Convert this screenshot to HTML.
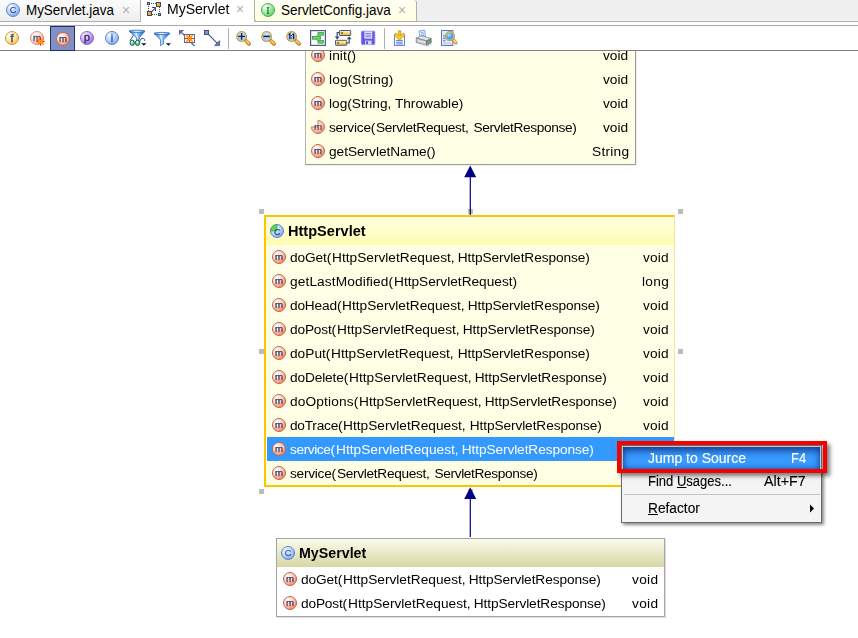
<!DOCTYPE html>
<html><head><meta charset="utf-8"><title>MyServlet</title>
<style>
html,body{margin:0;padding:0;}
body{width:858px;height:638px;overflow:hidden;background:#fff;position:relative;font-family:"Liberation Sans",sans-serif;font-size:14px;color:#000;}
div,span,svg{position:absolute;box-sizing:border-box;}
.ic{overflow:visible}
.t{white-space:pre;line-height:30px;}
.g{will-change:transform;}
.mi{-webkit-text-stroke:0.12px currentColor;}
.h{width:5px;height:5px;background:#bcbcbc;}
</style></head><body>
<svg width="0" height="0" style="position:absolute">
<defs>
<radialGradient id="g-m" cx="0.32" cy="0.26" r="0.82"><stop offset="0" stop-color="#fffcfa"/><stop offset="0.5" stop-color="#ffd0c0"/><stop offset="1" stop-color="#ff7e5c"/></radialGradient>
<radialGradient id="g-m2" cx="0.32" cy="0.26" r="0.82"><stop offset="0" stop-color="#ffffff"/><stop offset="0.5" stop-color="#ffe0d8"/><stop offset="1" stop-color="#f8a890"/></radialGradient>
<radialGradient id="g-c" cx="0.32" cy="0.26" r="0.82"><stop offset="0" stop-color="#f4f9ff"/><stop offset="0.5" stop-color="#bcd6fc"/><stop offset="1" stop-color="#74a4f0"/></radialGradient>
<radialGradient id="g-f" cx="0.32" cy="0.26" r="0.82"><stop offset="0" stop-color="#fffef2"/><stop offset="0.5" stop-color="#ffeaa8"/><stop offset="1" stop-color="#f6bc4c"/></radialGradient>
<radialGradient id="g-p" cx="0.32" cy="0.26" r="0.82"><stop offset="0" stop-color="#faf4ff"/><stop offset="0.5" stop-color="#d0b0f8"/><stop offset="1" stop-color="#9060e0"/></radialGradient>
<radialGradient id="g-i" cx="0.32" cy="0.26" r="0.82"><stop offset="0" stop-color="#f6fff6"/><stop offset="0.5" stop-color="#a4f0a4"/><stop offset="1" stop-color="#50cc5c"/></radialGradient>
<g id="i-m"><circle cx="8" cy="8" r="6.5" fill="url(#g-m)" stroke="#c0644c" stroke-width="1"/><text x="8" y="11.3" font-family="Liberation Sans, sans-serif" font-size="9.6" text-anchor="middle" fill="#283860" stroke="#283860" stroke-width="0.25">m</text></g>
<g id="i-m2"><circle cx="8" cy="8" r="6.5" fill="url(#g-m2)" stroke="#d48c7c" stroke-width="1"/><text x="8" y="11.4" font-family="Liberation Sans, sans-serif" font-size="9.8" text-anchor="middle" fill="#38486c" stroke="#38486c" stroke-width="0.3">m</text></g>
<g id="i-c"><circle cx="8" cy="8" r="6.5" fill="url(#g-c)" stroke="#5c84d0" stroke-width="1"/><text x="8" y="11.4" font-family="Liberation Sans, sans-serif" font-size="9.2" text-anchor="middle" fill="#34447c" stroke="#34447c" stroke-width="0.1">C</text></g>
<g id="i-f"><circle cx="8" cy="8" r="6.5" fill="url(#g-f)" stroke="#c89840" stroke-width="1"/><text x="8" y="11.8" font-family="Liberation Sans, sans-serif" font-size="10.6" text-anchor="middle" fill="#38486c" stroke="#38486c" stroke-width="0.45">f</text></g>
<g id="i-p"><circle cx="8" cy="8" r="6.5" fill="url(#g-p)" stroke="#8c68cc" stroke-width="1"/><text x="8" y="10.9" font-family="Liberation Sans, sans-serif" font-size="10.6" text-anchor="middle" fill="#34346c" stroke="#34346c" stroke-width="0.45">p</text></g>
<g id="i-ac"><circle cx="8" cy="8" r="6.5" fill="url(#g-c)" stroke="#5c84d0" stroke-width="1"/><path d="M8 8 V1.5 A6.5 6.5 0 0 0 1.5 8 Z" fill="#5cd45c" stroke="#3ca04c" stroke-width="0.6"/><text x="8.4" y="11.6" font-family="Liberation Sans, sans-serif" font-size="9.2" text-anchor="middle" fill="#2c3c6c" stroke="#2c3c6c" stroke-width="0.1">C</text></g>
<g id="i-am"><path d="M8 8 V1.5 A6.5 6.5 0 1 1 1.5 8 Z" fill="url(#g-m)" stroke="#cc7458" stroke-width="1"/><text x="8" y="11.3" font-family="Liberation Sans, sans-serif" font-size="9.8" text-anchor="middle" fill="#2c3c64" stroke="#2c3c64" stroke-width="0.15">m</text></g>
<g id="i-i"><circle cx="8" cy="8" r="6.5" fill="url(#g-c)" stroke="#5c84d0" stroke-width="1"/><text x="8" y="11.8" font-family="Liberation Sans, sans-serif" font-size="10.6" text-anchor="middle" fill="#3458b0" stroke="#3458b0" stroke-width="0.45">i</text></g>
<g id="i-I"><circle cx="8" cy="8" r="6.5" fill="url(#g-i)" stroke="#48b058" stroke-width="1"/><text x="8" y="11.6" font-family="Liberation Serif, serif" font-size="10" text-anchor="middle" fill="#2c4468" stroke="#2c4468" stroke-width="0.1">I</text></g>
</defs></svg>

<div style="left:0;top:0;width:858px;height:22px;background:#f0f0f0;border-bottom:1px solid #b4b4b4"></div>
<div style="left:0;top:0;width:141px;height:22px;background:linear-gradient(#fbfbfb,#eeeeee);border-right:1px solid #b0b0b0;border-bottom:1px solid #b0b0b0"></div>
<svg class="ic g" style="left:5px;top:2px" width="16" height="16" viewBox="0 0 16 16"><use href="#i-c"/></svg>
<span class="t" style="left:26.20px;top:-5px;font-size:14px;transform:scaleX(0.9569);transform-origin:0 20px">MyServlet.java</span>
<span class="t" style="left:121.68px;top:-5px;font-size:15px;transform:scaleX(0.9185);transform-origin:0 19px;color:#b0b0b0">×</span>
<div style="left:141px;top:0;width:113px;height:22px;background:#fff"></div>
<svg style="left:147px;top:2px" width="14" height="14" viewBox="0 0 14 14" shape-rendering="crispEdges"><g fill="#3a4a74"><rect x="0" y="0" width="3" height="3"/><rect x="11" y="11" width="3" height="3"/><rect x="9" y="0" width="5" height="5"/><rect x="0" y="9" width="5" height="5"/><rect x="4" y="1" width="1" height="1"/><rect x="6" y="1" width="1" height="1"/><rect x="8" y="1" width="1" height="1"/><rect x="1" y="4" width="1" height="1"/><rect x="1" y="6" width="1" height="1"/><rect x="1" y="8" width="1" height="1"/><rect x="12" y="5" width="1" height="1"/><rect x="12" y="7" width="1" height="1"/><rect x="12" y="9" width="1" height="1"/><rect x="5" y="12" width="1" height="1"/><rect x="7" y="12" width="1" height="1"/><rect x="9" y="12" width="1" height="1"/><rect x="5" y="5" width="4" height="1"/><rect x="8" y="5" width="1" height="4"/></g><rect x="1" y="1" width="1" height="1" fill="#88e868"/><rect x="12" y="12" width="1" height="1" fill="#88e868"/><rect x="10" y="1" width="3" height="3" fill="#ffa414"/><rect x="10" y="1" width="1" height="1" fill="#ffd890"/><rect x="1" y="10" width="3" height="3" fill="#ffa414"/><rect x="1" y="10" width="1" height="1" fill="#ffd890"/><path d="M5 9.4 L8 6.4" stroke="#3a4a74" stroke-width="1.2" shape-rendering="auto"/></svg>
<span class="t g" style="left:167.45px;top:-6px;font-size:14px;transform:scaleX(1.0016);transform-origin:0 20px">MyServlet</span>
<span class="t" style="left:235.78px;top:-6px;font-size:15px;transform:scaleX(0.9185);transform-origin:0 19px;color:#b0b0b0">×</span>
<div style="left:254px;top:0;width:163px;height:22px;background:linear-gradient(#fffff4,#ffffe2);border:1px solid #b0b0a4;border-top:none;border-radius:0 3px 0 3px"></div>
<svg class="ic g" style="left:260px;top:2px" width="16" height="16" viewBox="0 0 16 16"><use href="#i-I"/></svg>
<span class="t" style="left:280.98px;top:-5px;font-size:14px;transform:scaleX(0.9659);transform-origin:0 20px">ServletConfig.java</span>
<span class="t" style="left:398.08px;top:-5px;font-size:15px;transform:scaleX(0.9185);transform-origin:0 19px;color:#b0b0b0">×</span>
<div style="left:0;top:25px;width:858px;height:26px;background:#fff;border-top:1px solid #a8a8a8;border-bottom:1px solid #808080"></div>
<div style="left:50px;top:26px;width:25px;height:25px;background:#8090c0;border:1px solid #1c3080"></div>
<svg class="ic g" style="left:4px;top:30px" width="16" height="16" viewBox="0 0 16 16"><use href="#i-f"/></svg>
<svg class="ic g" style="left:29px;top:30px" width="16" height="16" viewBox="0 0 16 16"><use href="#i-m2"/></svg>
<svg class="ic g" style="left:55px;top:31px" width="16" height="16" viewBox="0 0 16 16"><use href="#i-m"/></svg>
<svg class="ic g" style="left:79px;top:30px" width="16" height="16" viewBox="0 0 16 16"><use href="#i-p"/></svg>
<svg class="ic g" style="left:104px;top:30px" width="16" height="16" viewBox="0 0 16 16"><use href="#i-i"/></svg>
<div style="left:228px;top:28px;width:1px;height:21px;background:#b0b0b0"></div>
<div style="left:384px;top:28px;width:1px;height:21px;background:#b0b0b0"></div>
<svg style="left:0;top:0" width="858" height="52" viewBox="0 0 858 52"><defs><linearGradient id="g-fun" x1="0" x2="1" y1="0" y2="0"><stop offset="0" stop-color="#2c78d4"/><stop offset="0.45" stop-color="#a8d4ff"/><stop offset="1" stop-color="#1c60c0"/></linearGradient><linearGradient id="g-rim" x1="0" x2="1" y1="0" y2="0"><stop offset="0" stop-color="#3c84dc"/><stop offset="0.4" stop-color="#e8f4ff"/><stop offset="0.6" stop-color="#e8f4ff"/><stop offset="1" stop-color="#3c84dc"/></linearGradient><linearGradient id="g-lens" x1="0" x2="0" y1="0" y2="1"><stop offset="0" stop-color="#e4f2ff"/><stop offset="0.55" stop-color="#9cccf8"/><stop offset="1" stop-color="#c8e4ff"/></linearGradient><linearGradient id="g-yl" x1="0" x2="0" y1="0" y2="1"><stop offset="0" stop-color="#fff8dc"/><stop offset="0.45" stop-color="#ffd878"/><stop offset="1" stop-color="#f4a41c"/></linearGradient></defs><g transform="translate(40.6 41.6)"><path d="M-3 -3 L3 3 M-3 3 L3 -3" stroke="#ff9400" stroke-width="1.6"/><path d="M0 -4.2 V4.2 M-4.2 0 H4.2" stroke="#ff2000" stroke-width="1"/><circle r="1.7" fill="#ffe860" stroke="#ff4800" stroke-width="0.6"/><circle r="0.6" fill="#ff2000"/></g><path d="M129.4 31.4 L136.5 37.8 V41 L139.5 39.2 V37.8 L144.6 31.4 Z" fill="url(#g-fun)" stroke="#2c6cc8" stroke-width="0.7"/><path d="M134.6 32.2 L137.4 37.8 V40 L138.2 39.6 V37.8 L136.4 32.2 Z" fill="#ffffff" opacity="0.75"/><ellipse cx="137.0" cy="31.3" rx="8.0" ry="1.1" fill="url(#g-rim)" stroke="#2464c0" stroke-width="0.8"/><path d="M130 40.6 L133.4 35.2" fill="none" stroke="#2a3a60" stroke-width="0.9"/><path d="M139.6 41.6 Q140.6 37.6 143.4 38.4 Q144.9 39 144.6 40.8" fill="none" stroke="#2a3a60" stroke-width="0.9"/><ellipse cx="132.2" cy="42.8" rx="2.2" ry="2.7" fill="#50e870" stroke="#2a3a60" stroke-width="0.9"/><ellipse cx="137.6" cy="42.8" rx="2.2" ry="2.7" fill="#50e870" stroke="#2a3a60" stroke-width="0.9"/><ellipse cx="131.8" cy="42" rx="0.9" ry="1.3" fill="#d0ffd8"/><ellipse cx="137.2" cy="42" rx="0.9" ry="1.3" fill="#d0ffd8"/><path d="M141.2 43.2 H146.4 L143.8 45.8 Z" fill="#101828"/><path d="M154.4 33.6 L160.5 40.0 V45.6 L163.5 43.800000000000004 V40.0 L169.6 33.6 Z" fill="url(#g-fun)" stroke="#2c6cc8" stroke-width="0.7"/><path d="M159.6 34.4 L161.4 40.0 V44.6 L162.2 44.2 V40.0 L161.4 34.4 Z" fill="#ffffff" opacity="0.75"/><ellipse cx="162.0" cy="33.5" rx="8.0" ry="1.1" fill="url(#g-rim)" stroke="#2464c0" stroke-width="0.8"/><path d="M165.8 43.2 H171 L168.4 45.8 Z" fill="#101828"/><path d="M180.6 31.6 L185 36" stroke="#4a5c94" stroke-width="1.2" fill="none"/><path d="M179 30 H184.2 L179 35.2 Z" fill="#5c70a8"/><path d="M191.4 43 L194.6 46" stroke="#4a5c94" stroke-width="1.2" fill="none"/><rect x="184.5" y="34.5" width="10" height="8" fill="#fffaf4" stroke="#5a6a9c" stroke-width="1"/><g transform="translate(189.5 38.5)"><path d="M-3.2 -3.2 L3.2 3.2 M-3.2 3.2 L3.2 -3.2" stroke="#ff9400" stroke-width="1.6"/><path d="M0 -4 V4 M-4.4 0 H4.4" stroke="#ff2000" stroke-width="1"/><circle r="1.7" fill="#ffd820" stroke="#ff4800" stroke-width="0.6"/><circle r="0.6" fill="#ff2000"/></g><rect x="204.5" y="30.5" width="4" height="4" fill="#8494c8" stroke="#3e4e84" stroke-width="1"/><path d="M208.4 34.4 L217.6 43.6" stroke="#4a5c94" stroke-width="1.3" fill="none"/><path d="M219.6 45.6 V40.6 L214.6 45.6 Z" fill="#6478b4" stroke="#3e4e84" stroke-width="0.7"/><line x1="246.2" y1="41.0" x2="249.0" y2="43.8" stroke="#b07418" stroke-width="3.8" stroke-linecap="round"/><line x1="246.2" y1="41.0" x2="248.9" y2="43.699999999999996" stroke="#f4a840" stroke-width="2.6" stroke-linecap="round"/><line x1="246.5" y1="40.699999999999996" x2="249.1" y2="43.3" stroke="#ffe0a8" stroke-width="0.9" stroke-linecap="round"/><circle cx="241.6" cy="36.4" r="5.3" fill="#a87c28"/><circle cx="241.6" cy="36.4" r="4.8" fill="#f0c460"/><circle cx="241.6" cy="36.4" r="3.9" fill="url(#g-lens)" stroke="#8a97b0" stroke-width="0.4"/><path d="M238.29999999999998 36.4H244.9M241.6 33.1V39.699999999999996" stroke="#14244c" stroke-width="1.4" fill="none"/><line x1="271.20000000000005" y1="41.0" x2="274.0" y2="43.8" stroke="#b07418" stroke-width="3.8" stroke-linecap="round"/><line x1="271.20000000000005" y1="41.0" x2="273.90000000000003" y2="43.699999999999996" stroke="#f4a840" stroke-width="2.6" stroke-linecap="round"/><line x1="271.5" y1="40.699999999999996" x2="274.1" y2="43.3" stroke="#ffe0a8" stroke-width="0.9" stroke-linecap="round"/><circle cx="266.6" cy="36.4" r="5.3" fill="#a87c28"/><circle cx="266.6" cy="36.4" r="4.8" fill="#f0c460"/><circle cx="266.6" cy="36.4" r="3.9" fill="url(#g-lens)" stroke="#8a97b0" stroke-width="0.4"/><path d="M263.3 36.4H269.90000000000003" stroke="#14244c" stroke-width="1.5" fill="none"/><line x1="296.20000000000005" y1="41.0" x2="299.0" y2="43.8" stroke="#b07418" stroke-width="3.8" stroke-linecap="round"/><line x1="296.20000000000005" y1="41.0" x2="298.90000000000003" y2="43.699999999999996" stroke="#f4a840" stroke-width="2.6" stroke-linecap="round"/><line x1="296.5" y1="40.699999999999996" x2="299.1" y2="43.3" stroke="#ffe0a8" stroke-width="0.9" stroke-linecap="round"/><circle cx="291.6" cy="36.4" r="5.3" fill="#a87c28"/><circle cx="291.6" cy="36.4" r="4.8" fill="#f0c460"/><circle cx="291.6" cy="36.4" r="3.9" fill="url(#g-lens)" stroke="#8a97b0" stroke-width="0.4"/><path d="M288.8 35.0L289.90000000000003 33.8V39.199999999999996M293.6 33.6V39.199999999999996M292.5 34.8L293.6 33.8" stroke="#14244c" stroke-width="1.3" fill="none"/><rect x="291.1" y="34.9" width="1" height="1.1" fill="#14244c"/><rect x="291.1" y="37.4" width="1" height="1.1" fill="#14244c"/><rect x="310.6" y="30.6" width="14.8" height="14.8" fill="#fff" stroke="#4a5a84" stroke-width="1.2"/><path d="M314.6 37.8 L318.6 34 M314.6 37.8 L318.6 41.8" stroke="#707888" stroke-width="0.7" fill="none"/><rect x="312.4" y="36.5" width="8" height="2.7" fill="#58e458" stroke="#2e8a3e" stroke-width="0.7"/><rect x="318" y="32.5" width="5.6" height="2.7" fill="#58e458" stroke="#2e8a3e" stroke-width="0.7"/><rect x="318" y="40.5" width="5.6" height="2.7" fill="#58e458" stroke="#2e8a3e" stroke-width="0.7"/><path d="M339.6 32.6 H337.2 V38.6" stroke="#3a4a6c" stroke-width="1.2" fill="none"/><path d="M334.8 36.6 H339.6 L337.2 39.6 Z" fill="#3a4a6c"/><path d="M346.6 43 H349.2 V37.4" stroke="#3a4a6c" stroke-width="1.2" fill="none"/><path d="M346.8 39.2 H351.6 L349.2 36.2 Z" fill="#3a4a6c"/><rect x="339.5" y="30.5" width="11.2" height="5" rx="0.6" fill="url(#g-yl)" stroke="#4a5a7c" stroke-width="1"/><rect x="335.5" y="40.3" width="11.2" height="5" rx="0.6" fill="url(#g-yl)" stroke="#4a5a7c" stroke-width="1"/><rect x="341.2" y="32.2" width="1.8" height="1.6" fill="#5c5c64"/><rect x="337.2" y="42" width="1.8" height="1.6" fill="#5c5c64"/><rect x="361.4" y="31.2" width="13.4" height="13.4" rx="1" fill="#6458e4" stroke="#8484dc" stroke-width="0.8"/><rect x="364.4" y="31.6" width="7.8" height="7" fill="#f8f8ff"/><path d="M365.2 33.3 H371.4 M365.2 35.1 H371.4 M365.2 36.9 H371.4" stroke="#6458e4" stroke-width="0.9"/><rect x="365" y="40.6" width="6.6" height="4" fill="#d4d4f4"/><rect x="366.2" y="41.4" width="1.8" height="2.6" fill="#5048c8"/><rect x="394.5" y="35.5" width="10" height="10" fill="#fff" stroke="#6484d0" stroke-width="1"/><path d="M396.2 40.4 H402.8 M396.2 42.2 H402.8 M396.2 43.9 H402.8" stroke="#4464cc" stroke-width="0.9"/><path d="M398.5 30.8 H400.7 V35.4 L403.6 33 L405 34.8 L399.6 40.2 L394.2 34.8 L395.6 33 L398.5 35.4 Z" fill="#ffcc18" stroke="#b8860c" stroke-width="0.7"/><path d="M419.8 37 L419 31 L424.6 30.2 L425.6 37 Z" fill="#eaf3ff" stroke="#5a90e0" stroke-width="0.8"/><path d="M420.8 32.6 L423.6 32.2 M421 34.2 L424 33.8 M421.2 35.6 L424.2 35.3" stroke="#5a90e0" stroke-width="0.7"/><path d="M416.2 38 L421 35.8 L431.2 38.4 L426.6 40.8 Z" fill="#e4e8ec" stroke="#788088" stroke-width="0.7"/><path d="M416.2 38 L426.6 40.8 V45.6 L416.2 42.4 Z" fill="#c4c8cc" stroke="#707880" stroke-width="0.7"/><path d="M426.6 40.8 L431.2 38.4 V42.8 L426.6 45.6 Z" fill="#8c9096" stroke="#606870" stroke-width="0.7"/><path d="M418 40.6 L425 42.6" stroke="#f4f6f8" stroke-width="1"/><path d="M422 45 L428 46.4 L431.6 44.2" stroke="#dfe3e8" stroke-width="1.1" fill="none"/><rect x="429" y="39.8" width="1.6" height="1.7" fill="#18c428"/><rect x="441.5" y="30.5" width="11.4" height="15" fill="#dfe8f8" stroke="#5c7cbc" stroke-width="1"/><path d="M443.2 36 H445.4 M443.2 38.4 H445.4 M443.2 40.8 H445.4" stroke="#3a58b8" stroke-width="0.9"/><rect x="443" y="42.6" width="8" height="1.6" fill="#c4d2f0"/><line x1="453.4" y1="40" x2="456" y2="42.8" stroke="#b07418" stroke-width="3.2" stroke-linecap="round"/><line x1="453.4" y1="40" x2="456" y2="42.8" stroke="#f8c070" stroke-width="2" stroke-linecap="round"/><line x1="453.8" y1="39.8" x2="456.2" y2="42.2" stroke="#fff4dc" stroke-width="0.8" stroke-linecap="round"/><circle cx="450" cy="36.2" r="4.9" fill="#a87c28"/><circle cx="450" cy="36.2" r="4.4" fill="#f0c460"/><circle cx="450" cy="36.2" r="3.5" fill="#4ca4f0"/><circle cx="449" cy="35.2" r="1.6" fill="#a8d8ff"/></svg>
<div style="left:0;top:51px;width:858px;height:587px;overflow:hidden"><div style="left:0;top:-51px;width:858px;height:638px">
<div style="left:305px;top:51px;width:331px;height:114px;background:#ffffe6;border:1px solid #9c9c9c;border-left-color:#b4b4b4;border-top:none;box-shadow:1px 1px 0 rgba(0,0,0,.06)"></div>
<svg class="ic g" style="left:310px;top:47px" width="16" height="16" viewBox="0 0 16 16"><use href="#i-m"/></svg>
<span class="t g" style="left:328.90px;top:41px;font-size:13.7px;letter-spacing:0.110px">init()</span>
<span class="t g" style="left:603.40px;top:41px;font-size:13.7px;letter-spacing:0.017px">void</span>
<svg class="ic g" style="left:310px;top:71px" width="16" height="16" viewBox="0 0 16 16"><use href="#i-m"/></svg>
<span class="t g" style="left:328.90px;top:65px;font-size:13.7px;letter-spacing:0.115px">log(String)</span>
<span class="t g" style="left:603.40px;top:65px;font-size:13.7px;letter-spacing:0.017px">void</span>
<svg class="ic g" style="left:310px;top:95px" width="16" height="16" viewBox="0 0 16 16"><use href="#i-m"/></svg>
<span class="t g" style="left:328.90px;top:89px;font-size:13.7px;letter-spacing:-0.005px">log(String, Throwable)</span>
<span class="t g" style="left:603.40px;top:89px;font-size:13.7px;letter-spacing:0.017px">void</span>
<svg class="ic g" style="left:310px;top:119px" width="16" height="16" viewBox="0 0 16 16"><use href="#i-am"/></svg>
<div style="left:0;top:0"><span class="t g" style="left:329.00px;top:113px;font-size:13.7px;letter-spacing:-0.221px">service(</span><span class="t g" style="left:376.15px;top:113px;font-size:13.7px;letter-spacing:-0.321px">ServletRequest,</span><span class="t g" style="left:470.16px;top:113px;font-size:13.7px;letter-spacing:-0.363px"> ServletResponse)</span></div>
<span class="t g" style="left:603.40px;top:113px;font-size:13.7px;letter-spacing:0.017px">void</span>
<svg class="ic g" style="left:310px;top:143px" width="16" height="16" viewBox="0 0 16 16"><use href="#i-m"/></svg>
<span class="t g" style="left:329.00px;top:137px;font-size:13.7px;letter-spacing:-0.040px">getServletName()</span>
<span class="t g" style="left:591.65px;top:137px;font-size:13.7px;letter-spacing:0.260px">String</span>
<div class="h" style="left:259px;top:209px"></div>
<div class="h" style="left:468px;top:209px"></div>
<div class="h" style="left:678px;top:209px"></div>
<div class="h" style="left:259px;top:349px"></div>
<div class="h" style="left:678px;top:349px"></div>
<div class="h" style="left:259px;top:489px"></div>
<div class="h" style="left:468px;top:489px"></div>
<div class="h" style="left:678px;top:489px"></div>
<svg style="left:0;top:0" width="858" height="638" viewBox="0 0 858 638"><g fill="#000080" stroke="none"><rect x="469.7" y="176" width="1.2" height="39"/><path d="M470.2 165.4 L476.2 177.2 H464.2 Z"/><rect x="469.7" y="498" width="1.2" height="39"/><path d="M470.2 487.2 L476.2 499 H464.2 Z"/></g></svg>
<div style="left:264px;top:215px;width:411px;height:272px;background:#ffffe6;border:2px solid #ffc400;border-right:1px solid #f8e2a4"></div>
<div style="left:266px;top:217px;width:408px;height:28px;background:linear-gradient(#ffffe2,#fffcb0)"></div>
<svg class="ic g" style="left:269px;top:223px" width="16" height="16" viewBox="0 0 16 16"><use href="#i-ac"/></svg>
<span class="t g" style="left:287.86px;top:216px;font-size:14px;transform:scaleX(1.0395);transform-origin:0 20px;font-weight:bold">HttpServlet</span>
<svg class="ic g" style="left:271px;top:249px" width="16" height="16" viewBox="0 0 16 16"><use href="#i-m"/></svg>
<div style="left:0;top:0"><span class="t g" style="left:290.30px;top:243px;font-size:13.7px;letter-spacing:-0.110px">doGet(</span><span class="t g" style="left:331.90px;top:243px;font-size:13.7px;letter-spacing:0.008px">HttpServletRequest,</span><span class="t g" style="left:454.40px;top:243px;font-size:13.7px;letter-spacing:-0.097px"> HttpServletResponse)</span></div>
<span class="t g" style="left:643.40px;top:243px;font-size:13.7px;letter-spacing:0.150px">void</span>
<svg class="ic g" style="left:271px;top:273px" width="16" height="16" viewBox="0 0 16 16"><use href="#i-m"/></svg>
<div style="left:0;top:0"><span class="t g" style="left:290.30px;top:267px;font-size:13.7px;letter-spacing:0.120px">getLastModified(</span><span class="t g" style="left:394.10px;top:267px;font-size:13.7px;letter-spacing:-0.006px">HttpServletRequest)</span></div>
<span class="t g" style="left:642.10px;top:267px;font-size:13.7px;letter-spacing:0.333px">long</span>
<svg class="ic g" style="left:271px;top:297px" width="16" height="16" viewBox="0 0 16 16"><use href="#i-m"/></svg>
<div style="left:0;top:0"><span class="t g" style="left:290.30px;top:291px;font-size:13.7px;letter-spacing:-0.175px">doHead(</span><span class="t g" style="left:341.90px;top:291px;font-size:13.7px;letter-spacing:0.008px">HttpServletRequest,</span><span class="t g" style="left:464.40px;top:291px;font-size:13.7px;letter-spacing:-0.097px"> HttpServletResponse)</span></div>
<span class="t g" style="left:643.40px;top:291px;font-size:13.7px;letter-spacing:0.150px">void</span>
<svg class="ic g" style="left:271px;top:321px" width="16" height="16" viewBox="0 0 16 16"><use href="#i-m"/></svg>
<div style="left:0;top:0"><span class="t g" style="left:290.30px;top:315px;font-size:13.7px;letter-spacing:-0.167px">doPost(</span><span class="t g" style="left:336.70px;top:315px;font-size:13.7px;letter-spacing:0.008px">HttpServletRequest,</span><span class="t g" style="left:459.20px;top:315px;font-size:13.7px;letter-spacing:-0.097px"> HttpServletResponse)</span></div>
<span class="t g" style="left:643.40px;top:315px;font-size:13.7px;letter-spacing:0.150px">void</span>
<svg class="ic g" style="left:271px;top:345px" width="16" height="16" viewBox="0 0 16 16"><use href="#i-m"/></svg>
<div style="left:0;top:0"><span class="t g" style="left:290.30px;top:339px;font-size:13.7px;letter-spacing:0.010px">doPut(</span><span class="t g" style="left:331.00px;top:339px;font-size:13.7px;letter-spacing:0.008px">HttpServletRequest,</span><span class="t g" style="left:453.50px;top:339px;font-size:13.7px;letter-spacing:-0.097px"> HttpServletResponse)</span></div>
<span class="t g" style="left:643.40px;top:339px;font-size:13.7px;letter-spacing:0.150px">void</span>
<svg class="ic g" style="left:271px;top:369px" width="16" height="16" viewBox="0 0 16 16"><use href="#i-m"/></svg>
<div style="left:0;top:0"><span class="t g" style="left:290.30px;top:363px;font-size:13.7px;letter-spacing:-0.131px">doDelete(</span><span class="t g" style="left:348.90px;top:363px;font-size:13.7px;letter-spacing:0.008px">HttpServletRequest,</span><span class="t g" style="left:471.40px;top:363px;font-size:13.7px;letter-spacing:-0.097px"> HttpServletResponse)</span></div>
<span class="t g" style="left:643.40px;top:363px;font-size:13.7px;letter-spacing:0.150px">void</span>
<svg class="ic g" style="left:271px;top:393px" width="16" height="16" viewBox="0 0 16 16"><use href="#i-m"/></svg>
<div style="left:0;top:0"><span class="t g" style="left:290.30px;top:387px;font-size:13.7px;letter-spacing:0.139px">doOptions(</span><span class="t g" style="left:358.70px;top:387px;font-size:13.7px;letter-spacing:0.008px">HttpServletRequest,</span><span class="t g" style="left:481.20px;top:387px;font-size:13.7px;letter-spacing:-0.097px"> HttpServletResponse)</span></div>
<span class="t g" style="left:643.40px;top:387px;font-size:13.7px;letter-spacing:0.150px">void</span>
<svg class="ic g" style="left:271px;top:417px" width="16" height="16" viewBox="0 0 16 16"><use href="#i-m"/></svg>
<div style="left:0;top:0"><span class="t g" style="left:290.30px;top:411px;font-size:13.7px;letter-spacing:-0.243px">doTrace(</span><span class="t g" style="left:343.00px;top:411px;font-size:13.7px;letter-spacing:0.008px">HttpServletRequest,</span><span class="t g" style="left:465.50px;top:411px;font-size:13.7px;letter-spacing:-0.097px"> HttpServletResponse)</span></div>
<span class="t g" style="left:643.40px;top:411px;font-size:13.7px;letter-spacing:0.150px">void</span>
<div style="left:266.5px;top:437px;width:407.5px;height:24px;background:#3399ff"></div>
<svg class="ic g" style="left:271px;top:441px" width="16" height="16" viewBox="0 0 16 16"><use href="#i-m"/></svg>
<div style="left:0;top:0"><span class="t g" style="left:290.30px;top:435px;font-size:13.7px;letter-spacing:-0.407px;color:#fff">service(</span><span class="t g" style="left:335.60px;top:435px;font-size:13.7px;letter-spacing:0.008px;color:#fff">HttpServletRequest,</span><span class="t g" style="left:458.10px;top:435px;font-size:13.7px;letter-spacing:-0.097px;color:#fff"> HttpServletResponse)</span></div>
<span class="t g" style="left:643.40px;top:435px;font-size:13.7px;letter-spacing:0.150px;color:#fff">void</span>
<svg class="ic g" style="left:271px;top:465px" width="16" height="16" viewBox="0 0 16 16"><use href="#i-m"/></svg>
<div style="left:0;top:0"><span class="t g" style="left:290.30px;top:459px;font-size:13.7px;letter-spacing:-0.264px">service(</span><span class="t g" style="left:337.15px;top:459px;font-size:13.7px;letter-spacing:-0.321px">ServletRequest,</span><span class="t g" style="left:431.16px;top:459px;font-size:13.7px;letter-spacing:-0.363px"> ServletResponse)</span></div>
<span class="t g" style="left:643.40px;top:459px;font-size:13.7px;letter-spacing:0.150px">void</span>
<div style="left:276px;top:538px;width:389px;height:79px;background:#fff;border:1px solid #a4a4a4;box-shadow:1px 1px 1px rgba(0,0,0,.12)"></div>
<div style="left:277px;top:539px;width:387px;height:28px;background:linear-gradient(#fbfbea,#d6d6a6)"></div>
<svg class="ic g" style="left:280px;top:545px" width="16" height="16" viewBox="0 0 16 16"><use href="#i-c"/></svg>
<span class="t g" style="left:298.68px;top:538px;font-size:14px;transform:scaleX(1.0169);transform-origin:0 20px;font-weight:bold">MyServlet</span>
<svg class="ic g" style="left:282px;top:571px" width="16" height="16" viewBox="0 0 16 16"><use href="#i-m"/></svg>
<div style="left:0;top:0"><span class="t g" style="left:301.30px;top:565px;font-size:13.7px;letter-spacing:-0.110px">doGet(</span><span class="t g" style="left:342.90px;top:565px;font-size:13.7px;letter-spacing:0.008px">HttpServletRequest,</span><span class="t g" style="left:465.40px;top:565px;font-size:13.7px;letter-spacing:-0.097px"> HttpServletResponse)</span></div>
<span class="t g" style="left:631.80px;top:565px;font-size:13.7px;letter-spacing:0.317px">void</span>
<svg class="ic g" style="left:282px;top:595px" width="16" height="16" viewBox="0 0 16 16"><use href="#i-m"/></svg>
<div style="left:0;top:0"><span class="t g" style="left:301.30px;top:589px;font-size:13.7px;letter-spacing:-0.167px">doPost(</span><span class="t g" style="left:347.70px;top:589px;font-size:13.7px;letter-spacing:0.008px">HttpServletRequest,</span><span class="t g" style="left:470.20px;top:589px;font-size:13.7px;letter-spacing:-0.097px"> HttpServletResponse)</span></div>
<span class="t g" style="left:631.80px;top:589px;font-size:13.7px;letter-spacing:0.317px">void</span>
</div></div>
<div style="left:621px;top:445px;width:201px;height:78px;background:#f4f4f4;border:1px solid #686868;box-shadow:2px 2px 3px rgba(0,0,0,.45)"></div>
<div style="left:622px;top:446px;width:199px;height:23px;border:1px solid #c8c8c8;border-bottom:none;background:#3a9bff;box-shadow:inset 0 7px 7px -3px rgba(8,40,120,.75),inset 5px 0 6px -4px rgba(8,40,120,.6),inset -5px 0 6px -4px rgba(8,40,120,.5),inset 0 -4px 5px -3px rgba(8,40,120,.45)"></div>
<span class="t mi" style="left:647.55px;top:443px;font-size:14px;transform:scaleX(0.9995);transform-origin:0 20px;color:#fff">Jump to Source</span>
<span class="t mi" style="left:790.85px;top:443px;font-size:14px;transform:scaleX(0.9220);transform-origin:0 20px;color:#fff">F4</span>
<span class="t mi" style="left:648.14px;top:466px;font-size:14px;transform:scaleX(0.9299);transform-origin:0 20px">Find <u>U</u>sages...</span>
<span class="t mi" style="left:764.30px;top:466px;font-size:14px;transform:scaleX(1.0186);transform-origin:0 20px">Alt+F7</span>
<div style="left:624px;top:494px;width:196px;height:1px;background:#c4c4c4"></div>
<span class="t mi" style="left:648.30px;top:493px;font-size:14px;transform:scaleX(0.9801);transform-origin:0 20px"><u>R</u>efactor</span>
<svg style="left:809px;top:504px" width="6" height="9" viewBox="0 0 6 9"><path d="M1 0.5 L5 4.5 L1 8.5 Z" fill="#000"/></svg>
<div style="left:617px;top:441px;width:210px;height:32px;border:4px solid #f60000;box-shadow:3px 3px 4px rgba(0,0,0,.5)"></div>
</body></html>
